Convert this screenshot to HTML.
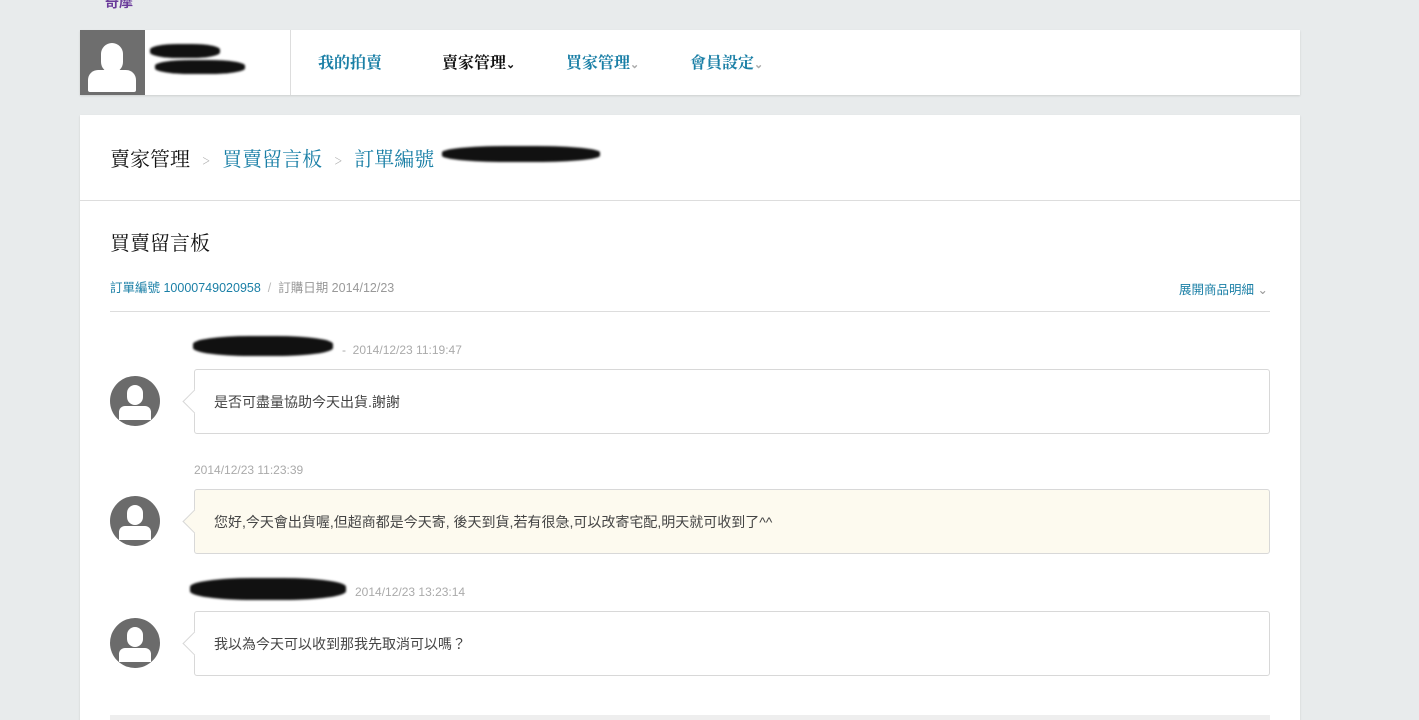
<!DOCTYPE html>
<html><head><meta charset="utf-8"><style>
*{margin:0;padding:0;box-sizing:border-box}
html,body{width:1419px;height:720px;overflow:hidden}
body{background:#e8ebec;font-family:"Liberation Sans","Noto Sans CJK TC",sans-serif;position:relative}
.abs{position:absolute}
.card{position:absolute;left:80px;width:1220px;background:#fff;box-shadow:0 1px 2px rgba(0,0,0,.12)}
.nav a{position:absolute;font-size:16px;font-weight:bold;color:#1a7fa6;font-family:"Noto Serif CJK SC","Noto Sans CJK TC",serif}
.av{position:absolute;left:110px;width:50px;height:50px;border-radius:50%;background:#6b6b6b;overflow:hidden}
.av i{position:absolute;left:17px;top:9px;width:16px;height:20px;border-radius:8px;background:#fff}
.av b{position:absolute;left:9px;top:30px;width:32px;height:14px;border-radius:6px 6px 0 0;background:#fff}
.bub{position:absolute;left:194px;width:1076px;height:65px;border:1px solid #d8d8d8;border-radius:3px;background:#fff;font-size:14px;color:#444;padding:22px 0 0 19px}
.bub:before{content:"";position:absolute;left:-9px;top:23px;width:16px;height:16px;background:inherit;border-left:1px solid #d8d8d8;border-bottom:1px solid #d8d8d8;transform:rotate(45deg)}
.ts{position:absolute;font-size:12px;color:#aaa}
.blob{position:absolute;background:#111;border-radius:40%;filter:blur(1px)}
</style></head><body>
<div class="abs" style="left:105px;top:-8px;width:60px;height:14px;color:#6a3a9a;font-size:14px;font-weight:bold">奇摩</div>
<div class="card nav" style="top:30px;height:65px">
 <div class="abs" style="left:0;top:0;width:65px;height:65px;background:#6e6e6e">
  <div class="abs" style="left:21px;top:13px;width:22px;height:30px;border-radius:11px;background:#fff"></div>
  <div class="abs" style="left:8px;top:40px;width:48px;height:22px;border-radius:10px 10px 2px 2px;background:#fff"></div>
 </div>
 <div class="blob" style="left:70px;top:14px;width:70px;height:14px"></div>
 <div class="blob" style="left:75px;top:30px;width:90px;height:14px"></div>
 <div class="abs" style="left:210px;top:0;width:1px;height:65px;background:#ddd"></div>
 <a style="left:238px;top:20px">我的拍賣</a>
 <a style="left:362px;top:20px;color:#111">賣家管理<span style="font-size:11px">⌄</span></a>
 <a style="left:486px;top:20px">買家管理<span style="font-size:11px;color:#aaa">⌄</span></a>
 <a style="left:610px;top:20px">會員設定<span style="font-size:11px;color:#aaa">⌄</span></a>
</div>
<div class="card" style="top:115px;height:620px">
 <div class="abs" style="left:30px;top:28px;font-size:20px;color:#111;font-family:'Noto Serif CJK SC',serif;white-space:nowrap">賣家管理<span style="color:#aaa;font-size:14px;margin:0 12px">&gt;</span><span style="color:#1a7fa6">買賣留言板</span><span style="color:#aaa;font-size:14px;margin:0 12px">&gt;</span><span style="color:#1a7fa6">訂單編號</span></div>
 <div class="blob" style="left:362px;top:31px;width:158px;height:16px"></div>
 <div class="abs" style="left:0;top:85px;width:1220px;height:1px;background:#ddd"></div>
 <div class="abs" style="left:30px;top:112px;font-size:20px;color:#111;font-family:'Noto Serif CJK SC',serif">買賣留言板</div>
 <div class="abs" style="left:30px;top:162px;font-size:12.5px;color:#1a7fa6">訂單編號 10000749020958 <span style="color:#bbb">&nbsp;/&nbsp;</span> <span style="color:#999">訂購日期 2014/12/23</span></div>
 <div class="abs" style="left:1099px;top:164px;font-size:12.5px;color:#1a7fa6">展開商品明細 <span style="color:#999">⌄</span></div>
 <div class="abs" style="left:30px;top:196px;width:1160px;height:1px;background:#ddd"></div>
</div>
<div class="blob" style="left:193px;top:336px;width:140px;height:20px"></div>
<div class="ts" style="left:342px;top:343px">-&nbsp; 2014/12/23 11:19:47</div>
<div class="av" style="top:376px"><i></i><b></b></div>
<div class="bub" style="top:369px">是否可盡量協助今天出貨.謝謝</div>
<div class="ts" style="left:194px;top:463px">2014/12/23 11:23:39</div>
<div class="av" style="top:496px"><i></i><b></b></div>
<div class="bub" style="top:489px;background:#fdfaef">您好,今天會出貨喔,但超商都是今天寄, 後天到貨,若有很急,可以改寄宅配,明天就可收到了^^</div>
<div class="blob" style="left:190px;top:578px;width:156px;height:22px"></div>
<div class="ts" style="left:355px;top:585px">2014/12/23 13:23:14</div>
<div class="av" style="top:618px"><i></i><b></b></div>
<div class="bub" style="top:611px">我以為今天可以收到那我先取消可以嗎？</div>
<div class="abs" style="left:110px;top:715px;width:1160px;height:5px;background:#eee"></div>
</body></html>
